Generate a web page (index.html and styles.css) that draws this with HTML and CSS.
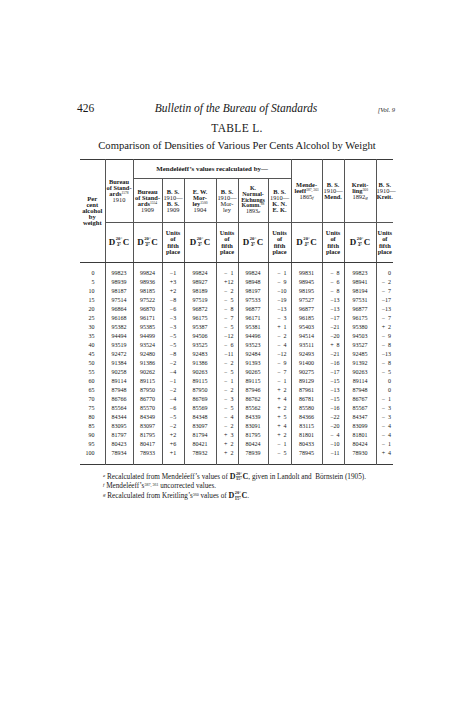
FILE: index.html
```html
<!DOCTYPE html>
<html>
<head>
<meta charset="utf-8">
<link rel="stylesheet" href="styles.css">
</head>
<body>
<div class="page">
  <div class="runhead">
    <span class="folio">426</span>
    <span class="rtitle">Bulletin of the Bureau of Standards</span>
    <span class="vol">[Vol. 9</span>
  </div>
  <div class="tno">TABLE L.</div>
  <div class="caption">Comparison of Densities of Various Per Cents Alcohol by Weight</div>

  <table class="data">
    <colgroup>
      <col class="w25"><col class="w28"><col class="w29"><col class="w22"><col class="w32"><col class="w22">
      <col class="w30"><col class="w23"><col class="w31"><col class="w22"><col class="w32"><col class="w17">
    </colgroup>
    <thead>
      <tr class="ra">
        <th rowspan="3" class="c1">Per<br>cent<br>alcohol<br>by<br>weight</th>
        <th rowspan="2" class="hb">Bureau<br>of Stand-<br>ards<sup>1578</sup><br><span class="rg">1910</span></th>
        <th colspan="6" class="mend">Mendeléeff’s values recalculated by—</th>
        <th rowspan="2" class="hb">Mende-<br>leeff<sup>387, 361</sup><br><span class="rg">1865<i>f</i></span></th>
        <th rowspan="2" class="hb">B. S.<br><span class="rg">1910—</span><br>Mend.</th>
        <th rowspan="2" class="hb">Kreit-<br>ling<sup>360</sup><br><span class="rg">1892<i>g</i></span></th>
        <th rowspan="2" class="hb">B. S.<br><span class="rg">1910—</span><br>Kreit.</th>
      </tr>
      <tr class="rb">
        <th class="hb">Bureau<br>of Stand-<br>ards<sup>1554</sup><br><span class="rg">1909</span></th>
        <th class="hb">B. S.<br><span class="rg">1910—</span><br>B. S.<br><span class="rg">1909</span></th>
        <th class="hb">E. W.<br>Mor-<br>ley<sup>1500</sup><br><span class="rg">1904</span></th>
        <th class="hb">B. S.<br><span class="rg">1910—<br>Mor-<br>ley</span></th>
        <th class="hb tight">K.<br>Normal-<br>Eichungs<br>Komm.<sup>88</sup><br><span class="rg">1893<i>e</i></span></th>
        <th class="hb">B. S.<br><span class="rg">1910—</span><br>K. N.<br>E. K.</th>
      </tr>
      <tr class="rc">
        <th><span class="dc"><b class="dl">D</b><span class="fr"><span>20°</span><span class="den">4°</span></span><b class="dl">C</b></span></th>
        <th><span class="dc"><b class="dl">D</b><span class="fr"><span>20°</span><span class="den">4°</span></span><b class="dl">C</b></span></th>
        <th class="units">Units<br>of<br>fifth<br>place</th>
        <th><span class="dc"><b class="dl">D</b><span class="fr"><span>20°</span><span class="den">4°</span></span><b class="dl">C</b></span></th>
        <th class="units">Units<br>of<br>fifth<br>place</th>
        <th><span class="dc"><b class="dl">D</b><span class="fr"><span>20°</span><span class="den">4°</span></span><b class="dl">C</b></span></th>
        <th class="units">Units<br>of<br>fifth<br>place</th>
        <th><span class="dc"><b class="dl">D</b><span class="fr"><span>20°</span><span class="den">4°</span></span><b class="dl">C</b></span></th>
        <th class="units">Units<br>of<br>fifth<br>place</th>
        <th><span class="dc"><b class="dl">D</b><span class="fr"><span>20°</span><span class="den">4°</span></span><b class="dl">C</b></span></th>
        <th class="units">Units<br>of<br>fifth<br>place</th>
      </tr>
    </thead>
    <tbody>
      <tr><td>0</td><td>99823</td><td>99824</td><td>−1</td><td>99824</td><td class="r">−&nbsp;&nbsp;1</td><td>99824</td><td class="r">−&nbsp;&nbsp;1</td><td>99831</td><td class="r">−&nbsp;&nbsp;8</td><td>99823</td><td class="r z">0</td></tr>
      <tr><td>5</td><td>98939</td><td>98936</td><td>+3</td><td>98927</td><td class="r">+12</td><td>98948</td><td class="r">−&nbsp;&nbsp;9</td><td>98945</td><td class="r">−&nbsp;&nbsp;6</td><td>98941</td><td class="r z">−&nbsp;&nbsp;2</td></tr>
      <tr><td>10</td><td>98187</td><td>98185</td><td>+2</td><td>98189</td><td class="r">−&nbsp;&nbsp;2</td><td>98197</td><td class="r">−10</td><td>98195</td><td class="r">−&nbsp;&nbsp;8</td><td>98194</td><td class="r z">−&nbsp;&nbsp;7</td></tr>
      <tr><td>15</td><td>97514</td><td>97522</td><td>−8</td><td>97519</td><td class="r">−&nbsp;&nbsp;5</td><td>97533</td><td class="r">−19</td><td>97527</td><td class="r">−13</td><td>97531</td><td class="r z">−17</td></tr>
      <tr><td>20</td><td>96864</td><td>96870</td><td>−6</td><td>96872</td><td class="r">−&nbsp;&nbsp;8</td><td>96877</td><td class="r">−13</td><td>96877</td><td class="r">−13</td><td>96877</td><td class="r z">−13</td></tr>
      <tr><td>25</td><td>96168</td><td>96171</td><td>−3</td><td>96175</td><td class="r">−&nbsp;&nbsp;7</td><td>96171</td><td class="r">−&nbsp;&nbsp;3</td><td>96185</td><td class="r">−17</td><td>96175</td><td class="r z">−&nbsp;&nbsp;7</td></tr>
      <tr><td>30</td><td>95382</td><td>95385</td><td>−3</td><td>95387</td><td class="r">−&nbsp;&nbsp;5</td><td>95381</td><td class="r">+&nbsp;&nbsp;1</td><td>95403</td><td class="r">−21</td><td>95380</td><td class="r z">+&nbsp;&nbsp;2</td></tr>
      <tr><td>35</td><td>94494</td><td>94499</td><td>−5</td><td>94506</td><td class="r">−12</td><td>94496</td><td class="r">−&nbsp;&nbsp;2</td><td>94514</td><td class="r">−20</td><td>94503</td><td class="r z">−&nbsp;&nbsp;9</td></tr>
      <tr><td>40</td><td>93519</td><td>93524</td><td>−5</td><td>93525</td><td class="r">−&nbsp;&nbsp;6</td><td>93523</td><td class="r">−&nbsp;&nbsp;4</td><td>93511</td><td class="r">+&nbsp;&nbsp;8</td><td>93527</td><td class="r z">−&nbsp;&nbsp;8</td></tr>
      <tr><td>45</td><td>92472</td><td>92480</td><td>−8</td><td>92483</td><td class="r">−11</td><td>92484</td><td class="r">−12</td><td>92493</td><td class="r">−21</td><td>92485</td><td class="r z">−13</td></tr>
      <tr><td>50</td><td>91384</td><td>91386</td><td>−2</td><td>91386</td><td class="r">−&nbsp;&nbsp;2</td><td>91393</td><td class="r">−&nbsp;&nbsp;9</td><td>91400</td><td class="r">−16</td><td>91392</td><td class="r z">−&nbsp;&nbsp;8</td></tr>
      <tr><td>55</td><td>90258</td><td>90262</td><td>−4</td><td>90263</td><td class="r">−&nbsp;&nbsp;5</td><td>90265</td><td class="r">−&nbsp;&nbsp;7</td><td>90275</td><td class="r">−17</td><td>90263</td><td class="r z">−&nbsp;&nbsp;5</td></tr>
      <tr><td>60</td><td>89114</td><td>89115</td><td>−1</td><td>89115</td><td class="r">−&nbsp;&nbsp;1</td><td>89115</td><td class="r">−&nbsp;&nbsp;1</td><td>89129</td><td class="r">−15</td><td>89114</td><td class="r z">0</td></tr>
      <tr><td>65</td><td>87948</td><td>87950</td><td>−2</td><td>87950</td><td class="r">−&nbsp;&nbsp;2</td><td>87946</td><td class="r">+&nbsp;&nbsp;2</td><td>87961</td><td class="r">−13</td><td>87948</td><td class="r z">0</td></tr>
      <tr><td>70</td><td>86766</td><td>86770</td><td>−4</td><td>86769</td><td class="r">−&nbsp;&nbsp;3</td><td>86762</td><td class="r">+&nbsp;&nbsp;4</td><td>86781</td><td class="r">−15</td><td>86767</td><td class="r z">−&nbsp;&nbsp;1</td></tr>
      <tr><td>75</td><td>85564</td><td>85570</td><td>−6</td><td>85569</td><td class="r">−&nbsp;&nbsp;5</td><td>85562</td><td class="r">+&nbsp;&nbsp;2</td><td>85580</td><td class="r">−16</td><td>85567</td><td class="r z">−&nbsp;&nbsp;3</td></tr>
      <tr><td>80</td><td>84344</td><td>84349</td><td>−5</td><td>84348</td><td class="r">−&nbsp;&nbsp;4</td><td>84339</td><td class="r">+&nbsp;&nbsp;5</td><td>84366</td><td class="r">−22</td><td>84347</td><td class="r z">−&nbsp;&nbsp;3</td></tr>
      <tr><td>85</td><td>83095</td><td>83097</td><td>−2</td><td>83097</td><td class="r">−&nbsp;&nbsp;2</td><td>83091</td><td class="r">+&nbsp;&nbsp;4</td><td>83115</td><td class="r">−20</td><td>83099</td><td class="r z">−&nbsp;&nbsp;4</td></tr>
      <tr><td>90</td><td>81797</td><td>81795</td><td>+2</td><td>81794</td><td class="r">+&nbsp;&nbsp;3</td><td>81795</td><td class="r">+&nbsp;&nbsp;2</td><td>81801</td><td class="r">−&nbsp;&nbsp;4</td><td>81801</td><td class="r z">−&nbsp;&nbsp;4</td></tr>
      <tr><td>95</td><td>80423</td><td>80417</td><td>+6</td><td>80421</td><td class="r">+&nbsp;&nbsp;2</td><td>80424</td><td class="r">−&nbsp;&nbsp;1</td><td>80433</td><td class="r">−10</td><td>80424</td><td class="r z">−&nbsp;&nbsp;1</td></tr>
      <tr><td>100</td><td>78934</td><td>78933</td><td>+1</td><td>78932</td><td class="r">+&nbsp;&nbsp;2</td><td>78939</td><td class="r">−&nbsp;&nbsp;5</td><td>78945</td><td class="r">−11</td><td>78930</td><td class="r z">+&nbsp;&nbsp;4</td></tr>
    </tbody>
  </table>

  <div class="notes">
    <div class="fn fn1"><sup class="fm">e</sup> Recalculated from Mendeléeff’s values of <span class="dc sm"><b class="dl">D</b><span class="fr"><span>20°</span><span class="den">15°</span></span><b class="dl">C</b></span>, given in Landolt and&nbsp; Börnstein (1905).</div>
    <div class="fn fn2"><sup class="fm">f</sup> Mendeléeff’s<sup>387, 361</sup> uncorrected values.</div>
    <div class="fn fn3"><sup class="fm">g</sup> Recalculated from Kreitling’s<sup>360</sup> values of <span class="dc sm"><b class="dl">D</b><span class="fr"><span>20°</span><span class="den">15°</span></span><b class="dl">C</b></span>.</div>
  </div>
</div>
</body>
</html>
```

FILE: styles.css
```css
* { box-sizing: border-box; }
html, body { margin: 0; padding: 0; background: #ffffff; }
body {
  color: #171717;
  font-family: "Liberation Serif", "Times New Roman", serif;
}
.page { width: 474px; height: 718px; overflow: hidden; }

.runhead {
  display: grid;
  grid-template-columns: 1fr auto 1fr;
  align-items: baseline;
  width: 318px;
  height: 12px;
  line-height: 12px;
  margin: 102px 0 0 77px;
}
.folio { font-size: 11.5px; }
.rtitle { font-size: 11.5px; font-style: italic; }
.vol { justify-self: end; font-size: 6.5px; font-style: italic; }

.tno {
  margin-top: 8px;
  height: 12px;
  line-height: 12px;
  text-align: center;
  font-size: 11.5px;
  letter-spacing: 0.3px;
}
.caption {
  margin-top: 6px;
  height: 12px;
  line-height: 12px;
  text-align: center;
  font-size: 10.6px;
}

.data {
  margin: 7px 0 0 80px;
  width: 313px;
  table-layout: fixed;
  border-collapse: collapse;
  border-top: 1px solid #3a3a3a;
  border-bottom: 1px solid #3a3a3a;
}
.w25 { width: 25px; } .w28 { width: 28px; } .w29 { width: 29px; }
.w22 { width: 22px; } .w32 { width: 32px; } .w30 { width: 30px; }
.w23 { width: 23px; } .w31 { width: 31px; } .w17 { width: 17px; }

.data th, .data td {
  padding: 0;
  border-left: 1px solid #555;
  text-align: center;
  vertical-align: middle;
}
.data th:first-child, .data td:first-child { border-left: none; }
.data tr.rb th:first-child { border-left: 1px solid #555; }
.data tr.rc th:first-child { border-left: 1px solid #555; }

.data th {
  font-weight: bold;
  font-size: 6.4px;
  line-height: 6px;
  white-space: nowrap;
}
.data .rg { font-weight: normal; }
.data sup { font-size: 3.6px; font-weight: normal; vertical-align: 2px; line-height: 0; }
.data th i { font-size: 5px; }

.ra th { height: 19px; }
.ra th.mend { font-size: 6.9px; line-height: 8px; border-bottom: 1px solid #555; }
.ra th.hb { border-bottom: 1px solid #555; }
.rb th { height: 44px; border-bottom: 1px solid #555; }
.rb th.tight { font-size: 6px; line-height: 5.8px; }
.rc th { height: 40px; border-bottom: 1px solid #3a3a3a; }
.ra th.c1 { border-bottom: 1px solid #3a3a3a; line-height: 6px; font-size: 6.6px; }
.units { line-height: 6.4px !important; }

.dc { display: inline-flex; align-items: center; }
.dl { font-size: 9px; line-height: 9px; font-weight: bold; }
.fr {
  display: inline-flex;
  flex-direction: column;
  align-items: center;
  font-size: 4.6px;
  line-height: 4.6px;
  font-weight: bold;
  margin: 0 0.5px;
}
.den { border-top: 0.5px solid #888; }

.data td {
  font-size: 6px;
  line-height: 9px;
  height: 9px;
  white-space: nowrap;
}
.data td:first-child { text-align: right; padding-right: 10px; }
.data td.r { text-align: right; padding-right: 4px; }
.data td.z { padding-right: 2px; }
.data tbody tr:first-child td { padding-top: 6px; height: 15px; }
.data tbody tr:last-child td { padding-bottom: 6px; height: 15px; }

.notes { margin: 7px 0 0 103px; }
.fn { font-size: 7.2px; white-space: nowrap; }
.fn1 { height: 9px; line-height: 9px; }
.fn2 { height: 10px; line-height: 10px; }
.fn3 { height: 10px; line-height: 10px; }
.fn sup { font-size: 4px; vertical-align: 2px; line-height: 0; }
.fn .fm { font-style: italic; font-size: 5px; }
.fn .dc.sm { vertical-align: middle; line-height: 0; }
.fn .dl { font-size: 8px; line-height: 0; }
.fn .fr { line-height: 4.4px; font-size: 4.4px; }
```
